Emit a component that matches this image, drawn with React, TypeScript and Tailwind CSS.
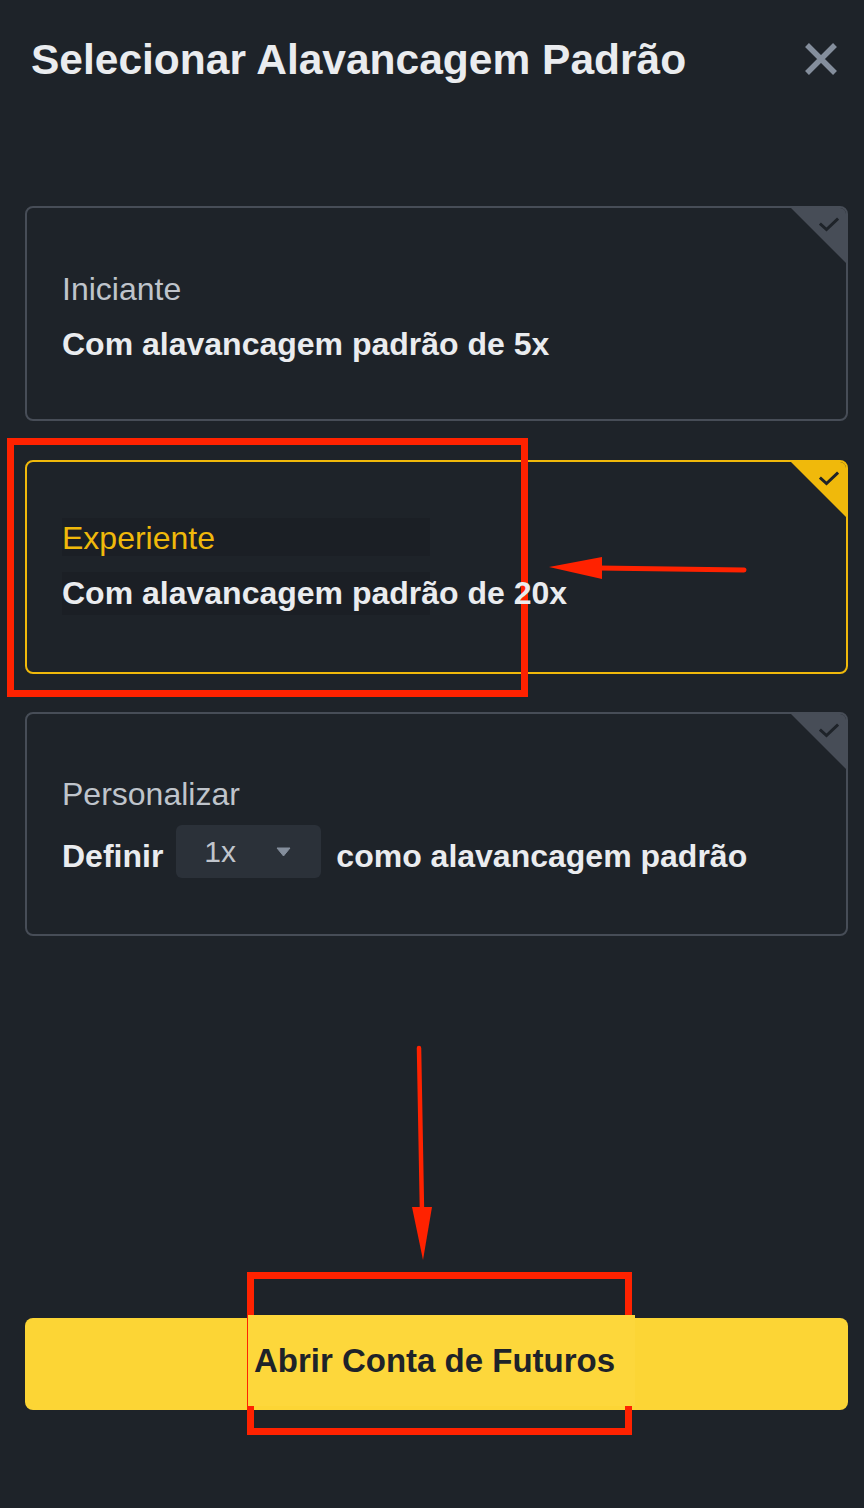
import React from 'react';

const font = 'font-[family-name:Liberation_Sans,Arial,sans-serif]';

function Check() {
  return (
    <svg viewBox="0 0 20 15" className="absolute top-[9px] right-[7px] w-[20px] h-[15px]">
      <path d="M2 7.5 L7.5 12.5 L18 2.5" fill="none" stroke="#1e2329" strokeWidth="3" strokeLinecap="square" />
    </svg>
  );
}

function Corner({ active }: { active?: boolean }) {
  return (
    <div
      className={`absolute top-0 right-0 w-[55px] h-[55px] [clip-path:polygon(0_0,100%_0,100%_100%)] ${
        active ? 'bg-[#f0b90b]' : 'bg-[#474d57]'
      }`}
    >
      <Check />
    </div>
  );
}

export default function App() {
  return (
    <div className={`relative min-h-screen w-full flex flex-col bg-[#1e2329] ${font}`}>
      {/* Header */}
      <div className="flex items-center justify-between pt-[35px] pl-[31px] pr-[26px]">
        <h1 className="text-[42.5px] leading-[50px] font-bold text-[#eaecef]">Selecionar Alavancagem Padrão</h1>
        <button className="w-[34px] h-[34px] mt-[-2px]">
          <svg viewBox="0 0 34 34" className="w-[34px] h-[34px]">
            <path d="M3 3 L31 31 M31 3 L3 31" stroke="#848e9c" strokeWidth="5.5" strokeLinecap="butt" />
          </svg>
        </button>
      </div>

      {/* Options */}
      <div className="flex flex-col ml-[25px] mr-[16px] mt-[121px]">
        {/* Iniciante */}
        <div className="relative overflow-hidden rounded-[8px] border-2 border-[#474d57] pl-[35px] pt-[61px] pb-[55px]">
          <Corner />
          <div className="text-[32px] leading-[40px] text-[#bfc4cb]">Iniciante</div>
          <div className="mt-[15px] text-[32px] leading-[40px] font-bold text-[#eaecef]">Com alavancagem padrão de 5x</div>
        </div>

        {/* Experiente */}
        <div className="relative overflow-hidden mt-[39px] rounded-[8px] border-2 border-[#f0b90b] pl-[35px] pt-[56px] pb-[57px]">
          <Corner active />
          <div className="relative z-30 w-[368px] h-[38px] text-[32px] leading-[40px] text-[#f0b90b] bg-[#1b1f25]">Experiente</div>
          <div className="relative z-30 mt-[16px] h-[43px] text-[32px] leading-[42px] font-bold text-[#eaecef]">
            <div className="absolute left-0 top-0 w-[368px] h-[43px] bg-[#1b1f25]" />
            <span className="relative">Com alavancagem padrão de 20x</span>
          </div>
        </div>

        {/* Personalizar */}
        <div className="relative overflow-hidden mt-[38px] rounded-[8px] border-2 border-[#474d57] pl-[35px] pt-[60px] pb-[56px]">
          <Corner />
          <div className="text-[32px] leading-[40px] text-[#bfc4cb]">Personalizar</div>
          <div className="mt-[11px] flex items-center">
            <span className="mt-[9px] text-[32px] leading-[40px] font-bold text-[#eaecef]">Definir</span>
            <div className="ml-[13px] w-[145px] h-[53px] rounded-[6px] bg-[#2b3139] flex items-center justify-between pl-[28px] pr-[30px]">
              <span className="text-[30px] leading-[36px] text-[#c0c5cc]">1x</span>
              <svg viewBox="0 0 15 10" className="w-[15px] h-[10px]">
                <path d="M1 1 H14 L7.5 9 Z" fill="#848e9c" stroke="#848e9c" strokeWidth="1" strokeLinejoin="round" />
              </svg>
            </div>
            <span className="ml-[15px] mt-[9px] text-[32px] leading-[40px] font-bold text-[#eaecef]">como alavancagem padrão</span>
          </div>
        </div>
      </div>

      <div className="flex-1" />

      {/* Footer button */}
      <button className="relative ml-[25px] mr-[16px] mb-[98px] h-[92px] rounded-[8px] bg-[#fcd535] flex items-center justify-center pb-[7px] pr-[4px]">
        <div className="absolute left-[223px] top-[-3px] w-[387px] h-[91px] bg-[#fdd73b] z-20" />
        <span className="relative z-30 text-[33px] leading-[40px] font-bold text-[#1e2329]">Abrir Conta de Futuros</span>
      </button>

      {/* Annotations */}
      <div className="pointer-events-none absolute left-[7px] top-[438px] w-[521px] h-[259px] border-[7px] border-[#ff2200] z-10" />
      <div className="pointer-events-none absolute left-[247px] top-[1272px] w-[385px] h-[163px] border-[7px] border-[#ff2200] z-10" />
      <svg viewBox="0 0 864 1508" className="pointer-events-none absolute left-0 top-0 w-[864px] h-[1508px] z-40">
        <line x1="598" y1="568" x2="744" y2="570" stroke="#ff2200" strokeWidth="5" strokeLinecap="round" />
        <polygon points="549,567 602,557 602,579" fill="#ff2200" />
        <line x1="419" y1="1048" x2="422" y2="1212" stroke="#ff2200" strokeWidth="4.5" strokeLinecap="round" />
        <polygon points="412,1207 432,1207 423,1260" fill="#ff2200" />
      </svg>
    </div>
  );
}
